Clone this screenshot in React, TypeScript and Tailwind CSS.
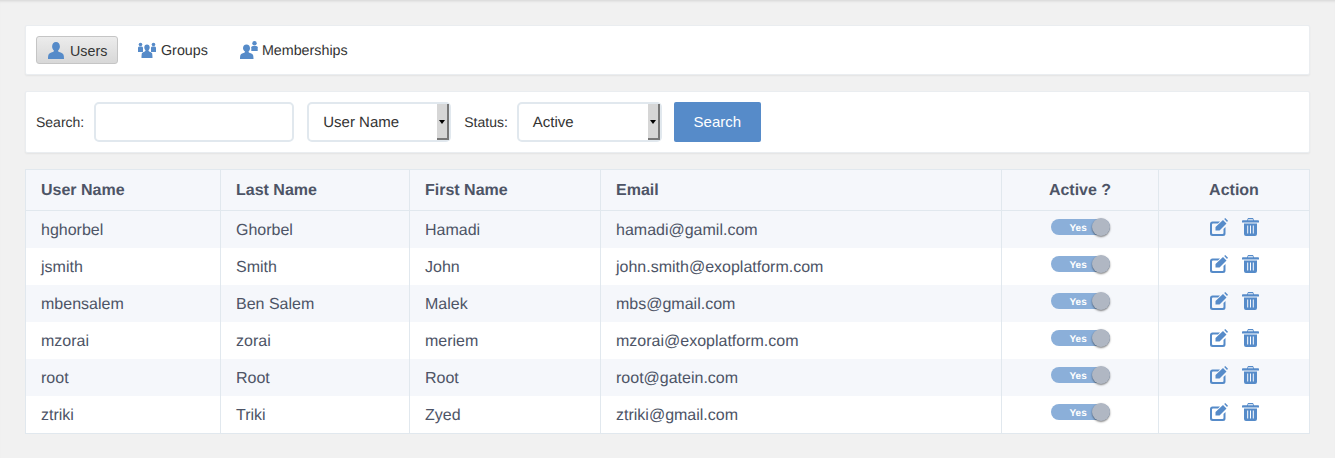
const users = [
  ['hghorbel', 'Ghorbel', 'Hamadi', 'hamadi@gamil.com'],
  ['jsmith', 'Smith', 'John', 'john.smith@exoplatform.com'],
  ['mbensalem', 'Ben Salem', 'Malek', 'mbs@gmail.com'],
  ['mzorai', 'zorai', 'meriem', 'mzorai@exoplatform.com'],
  ['root', 'Root', 'Root', 'root@gatein.com'],
  ['ztriki', 'Triki', 'Zyed', 'ztriki@gmail.com'],
];

function Person({ className }: { className: string }) {
  return (
    <svg viewBox="0 0 16 17" className={className} fill="#568bc9">
      <path d="M8 0c2.400 0 3.900 1.900 3.900 4.400 0 1.700-.8 3.200-1.800 4 0 .8.300 1.200 1 1.500 2.400.8 4.100 1.500 4.500 3.100.2.800.4 2 .4 4H0c0-2 .2-3.200.4-4 .4-1.600 2.100-2.300 4.500-3.100.7-.3 1-.7 1-1.500-1-.8-1.800-2.300-1.800-4C4.100 1.900 5.600 0 8 0z" />
    </svg>
  );
}

function GroupIcon() {
  return (
    <svg viewBox="0 0 18 16" className="h-4 w-[18px]" fill="#568bc9">
      <circle cx="2.500" cy="2.500" r="1.800" />
      <circle cx="15.500" cy="2.500" r="1.800" />
      <path d="M0 6c0-1 .8-1.400 2.500-1.400S5 5 5 6v4H0zM13 6c0-1 .8-1.400 2.500-1.400S18 5 18 6v4h-5z" />
      <path d="M9 2.500c1.700 0 2.700 1.300 2.700 3 0 1.100-.6 2.200-1.200 2.800 0 .6.200.9.700 1.100 1.700.6 2.700 1 3 2.200.1.600.3 2.400.3 4.400H3.500c0-2 .2-3.800.3-4.400.3-1.200 1.300-1.600 3-2.200.5-.2.700-.5.700-1.100-.6-.6-1.200-1.700-1.200-2.800 0-1.700 1-3 2.700-3z" />
    </svg>
  );
}

function MembershipIcon() {
  return (
    <svg viewBox="0 0 18 18" className="h-[18px] w-[18px]" fill="#568bc9">
      <circle cx="14.500" cy="2.300" r="2.200" />
      <path d="M11.300 6.300c0-.9 1-1.400 3.200-1.400s3.200.5 3.200 1.400V10h-6.400z" />
      <path d="M6.500 3.500c2.200 0 3.500 1.700 3.500 3.700 0 1.400-.7 2.800-1.500 3.400 0 .6.200.9.800 1.200 2 .7 3.600 1.300 3.900 2.700.1.700.3 1.900.3 3.500H0c0-1.600.2-2.800.3-3.500.3-1.400 1.900-2 3.900-2.700.6-.3.800-.6.800-1.200C4.200 10 3 8.600 3 7.200c0-2 1.300-3.700 3.500-3.700z" />
    </svg>
  );
}

function EditIcon() {
  return (
    <svg viewBox="0 0 18 18" className="h-[18px] w-[18px]" fill="#568bc9">
      <path d="M2.500 3.500H10L8 5.500H3a1 1 0 0 0-1 1v8.500a1 1 0 0 0 1 1h9.500a1 1 0 0 0 1-1v-4l2-2v6.500a2.500 2.500 0 0 1-2.500 2.500H2.500A2.500 2.500 0 0 1 0 15.500v-9.500a2.500 2.500 0 0 1 2.500-2.500z" />
      <path d="M13 2l3.500 3.500-7 7H5.500V9zM14.200 1l1-1L18 2.800 17 4z" />
    </svg>
  );
}

function TrashIcon() {
  return (
    <svg viewBox="0 0 17 18" className="h-[18px] w-[17px]" fill="#568bc9">
      <path d="M6 0h5l1 2.200h4.200a.8.800 0 0 1 .8.800v1.500H0V3a.8.800 0 0 1 .8-.8H5zM6.300 1.200l-.4 1h5.200l-.4-1z" />
      <path d="M2 5.500h13V16a2 2 0 0 1-2 2H4a2 2 0 0 1-2-2zM5.200 7.500v8h1v-8zM8 7.500v8h1v-8zM10.800 7.500v8h1v-8z" fillRule="evenodd" />
    </svg>
  );
}

function Toggle() {
  return (
    <div className="relative mx-auto flex h-4 w-[59px] items-center rounded-full bg-[#8bafd9] pl-[19px]">
      <span className="pt-[3px] text-[10px] font-bold text-white">Yes</span>
      <span className="absolute top-[-1px] right-0 size-[18px] rounded-full bg-[#b0b7c3] shadow-[0_1px_2px_rgba(0,0,0,0.5)]" />
    </div>
  );
}

function SelectBox({ label, width }: { label: string; width: string }) {
  return (
    <div className={`flex h-10 items-center justify-between rounded-[5px] border-2 border-[#e1e8ee] bg-white pl-[14px] ${width}`}>
      <span className="pt-[2px] text-[15px] text-[#333]">{label}</span>
      <span className="flex h-[36px] w-[12px] items-center justify-center border-r-2 border-b-2 border-[#777] bg-[#d6d6d6]">
        <span className="mt-[1px] border-x-[3px] border-t-[4px] border-x-transparent border-t-black" />
      </span>
    </div>
  );
}

export default function App() {
  return (
    <div className="h-[458px] overflow-hidden bg-[#f1f1f1] px-[25px] pt-[25px] font-['Liberation_Sans',Arial,sans-serif] text-[#333] shadow-[inset_0_3px_3px_-2px_rgba(0,0,0,0.12)] [text-rendering:geometricPrecision]">
      <div className="flex h-[50px] items-center gap-[20px] rounded-[2px] border border-[#eaedf0] bg-white px-[10px] text-[14.3px] shadow-[0_1px_2px_rgba(0,0,0,0.06)]">
        <button className="flex h-[28px] w-[82px] items-center gap-[6px] rounded-[3px] border border-[#c5c5c5] bg-gradient-to-b from-[#ececec] to-[#d8d8d8] pl-[11px]">
          <Person className="h-[17px] w-[16px]" />
          <span className="pt-[4px]">Users</span>
        </button>
        <span className="flex items-center gap-[5px]">
          <GroupIcon />
          <span className="pt-[4px]">Groups</span>
        </span>
        <span className="ml-[12px] flex items-center gap-[4px]">
          <MembershipIcon />
          <span className="pt-[4px]">Memberships</span>
        </span>
      </div>

      <div className="mt-[16px] flex h-[62px] items-center rounded-[2px] border border-[#eaedf0] bg-white px-[10px] text-sm shadow-[0_1px_2px_rgba(0,0,0,0.06)]">
        <span className="mr-[10px]">Search:</span>
        <div className="h-10 w-[200px] rounded-[5px] border-2 border-[#e1e8ee] bg-white" />
        <div className="ml-[13px]">
          <SelectBox label="User Name" width="w-[144px]" />
        </div>
        <span className="mr-[9px] ml-[13px]">Status:</span>
        <SelectBox label="Active" width="w-[145px]" />
        <button className="ml-[12px] h-10 w-[87px] rounded-[2px] bg-[#568bc9] text-[15px] text-white">Search</button>
      </div>

      <table className="mt-[16px] w-[1285px] table-fixed border-collapse border border-[#e1e8ee] bg-white text-[16px] text-[#4d5466]">
        <colgroup>
          <col className="w-[195px]" />
          <col className="w-[189px]" />
          <col className="w-[191px]" />
          <col className="w-[401px]" />
          <col className="w-[157px]" />
          <col />
        </colgroup>
        <thead>
          <tr className="h-[41px] bg-[#f5f7fb] font-bold">
            <th className="border-r border-b border-[#e1e8ee] pt-[2px] pl-[15px] text-left">User Name</th>
            <th className="border-r border-b border-[#e1e8ee] pt-[2px] pl-[15px] text-left">Last Name</th>
            <th className="border-r border-b border-[#e1e8ee] pt-[2px] pl-[15px] text-left">First Name</th>
            <th className="border-r border-b border-[#e1e8ee] pt-[2px] pl-[15px] text-left">Email</th>
            <th className="border-r border-b border-[#e1e8ee] pt-[2px] text-center">Active ?</th>
            <th className="border-b border-[#e1e8ee] pt-[2px] text-center">Action</th>
          </tr>
        </thead>
        <tbody>
          {users.map((u, i) => (
            <tr key={u[0]} className={i === 5 ? 'h-[38px] bg-white' : i % 2 === 0 ? 'h-[37px] bg-[#f5f7fb]' : 'h-[37px] bg-white'}>
              {u.map((v) => (
                <td key={v} className="border-r border-[#e1e8ee] pt-[4px] pl-[15px]">{v}</td>
              ))}
              <td className="border-r border-[#e1e8ee] pb-[5px]"><Toggle /></td>
              <td className="pb-[5px]">
                <div className="flex items-center justify-center gap-[14px] pl-[1px]">
                  <EditIcon />
                  <TrashIcon />
                </div>
              </td>
            </tr>
          ))}
        </tbody>
      </table>
    </div>
  );
}
